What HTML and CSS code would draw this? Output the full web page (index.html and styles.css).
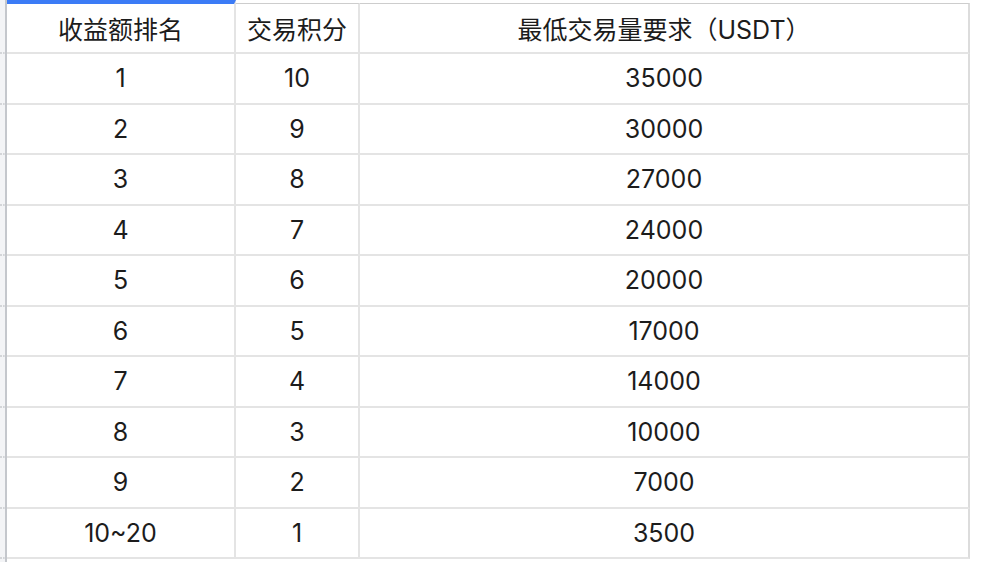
FILE: index.html
```html
<!DOCTYPE html>
<html lang="zh">
<head>
<meta charset="utf-8">
<title>交易积分</title>
<link rel="stylesheet" href="styles.css">
</head>
<body>
<div class="sheet">
  <div class="gutter">
    <div class="g g-head"></div>
    <div class="g"></div><div class="g"></div><div class="g"></div><div class="g"></div><div class="g"></div>
    <div class="g"></div><div class="g"></div><div class="g"></div><div class="g"></div><div class="g"></div>
  </div>
  <div class="table">
    <div class="row head">
      <div class="cell c1 sel">收益额排名</div>
      <div class="cell c2">交易积分</div>
      <div class="cell c3">最低交易量要求（USDT）</div>
    </div>
    <div class="row"><div class="cell c1">1</div><div class="cell c2">10</div><div class="cell c3">35000</div></div>
    <div class="row"><div class="cell c1">2</div><div class="cell c2">9</div><div class="cell c3">30000</div></div>
    <div class="row"><div class="cell c1">3</div><div class="cell c2">8</div><div class="cell c3">27000</div></div>
    <div class="row"><div class="cell c1">4</div><div class="cell c2">7</div><div class="cell c3">24000</div></div>
    <div class="row"><div class="cell c1">5</div><div class="cell c2">6</div><div class="cell c3">20000</div></div>
    <div class="row"><div class="cell c1">6</div><div class="cell c2">5</div><div class="cell c3">17000</div></div>
    <div class="row"><div class="cell c1">7</div><div class="cell c2">4</div><div class="cell c3">14000</div></div>
    <div class="row"><div class="cell c1">8</div><div class="cell c2">3</div><div class="cell c3">10000</div></div>
    <div class="row"><div class="cell c1">9</div><div class="cell c2">2</div><div class="cell c3">7000</div></div>
    <div class="row"><div class="cell c1">10~20</div><div class="cell c2">1</div><div class="cell c3">3500</div></div>
  </div>
</div>
</body>
</html>
```
FILE: styles.css
```css
* { box-sizing: border-box; }
html, body { margin: 0; padding: 0; background: #ffffff; }
body {
  font-family: "Inter", "Noto Sans CJK SC", sans-serif;
  font-size: 25px;
  color: #1c1c1c;
}
.sheet {
  display: flex;
  width: 982px;
  height: 562px;
  overflow: hidden;
}
.gutter {
  width: 7px;
  flex: none;
  background: #f3f4f6;
  border-right: 2px solid #c4c7cc;
  display: flex;
  flex-direction: column;
}
.g {
  height: 50.5px;
  flex: none;
  border-bottom: 2px dotted #d3d5d8;
}
.g.g-head { height: 54px; }
.table {
  display: flex;
  flex-direction: column;
}
.row {
  display: flex;
  height: 50.5px;
  flex: none;
}
.row.head { height: 54px; }
.cell {
  display: flex;
  align-items: center;
  justify-content: center;
  border-right: 2px solid #e4e4e4;
  border-bottom: 2px solid #e4e4e4;
  white-space: nowrap;
}
.c1 { width: 229px; }
.c2 { width: 124px; }
.c3 { width: 610px; border-right-color: #dcdcdc; }
.head .cell {
  border-top: 1px solid #cdcdcd;
  margin-top: 3px;
}
.head .cell.sel {
  border-top: 4px solid #3b7bf6;
  margin-top: 0;
}
```
